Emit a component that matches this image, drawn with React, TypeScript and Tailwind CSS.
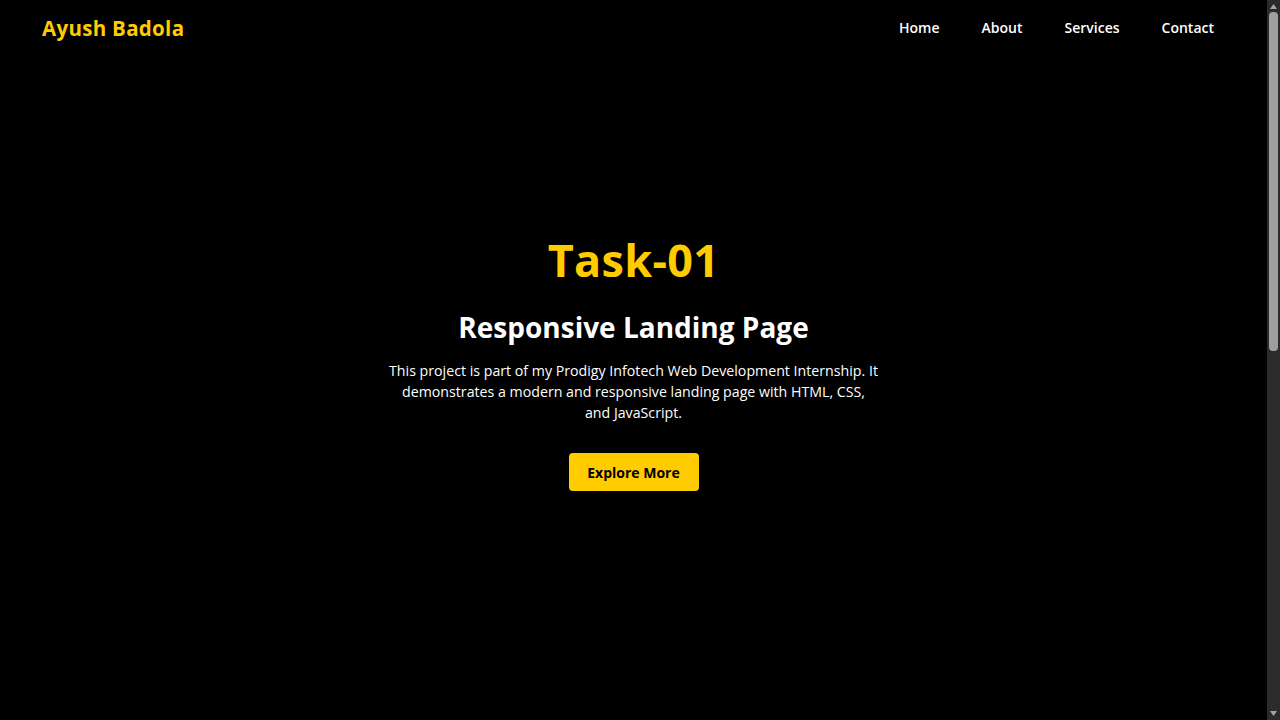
const links = ["Home", "About", "Services", "Contact"];

function FakeScrollbar() {
  return (
    <div className="w-[13px] shrink-0 h-screen bg-[#2b2b2b] flex flex-col items-center">
      <svg width="9" height="11" viewBox="0 0 9 11" className="shrink-0">
        <path d="M1 9 L4.5 4 L8 9 Z" fill="#a3a3a3" />
      </svg>
      <div className="mt-[1px] w-[9px] h-[339px] rounded-[4px] bg-[#9f9f9f]" />
      <div className="flex-1" />
      <svg width="9" height="11" viewBox="0 0 9 11" className="shrink-0 mb-[1px]">
        <path d="M1 3 L8 3 L4.5 8 Z" fill="#a3a3a3" />
      </svg>
    </div>
  );
}

export default function App() {
  return (
    <div className="h-screen flex bg-black text-white font-['Open_Sans',_'Liberation_Sans',_sans-serif] overflow-hidden">
      <div className="flex-1 flex flex-col min-w-0">
        <header className="flex items-center justify-between pl-[42px] pr-[53px] h-[57px] shrink-0">
          <a href="#" className="text-[20.5px] font-bold text-[#ffcc00] tracking-[0.3px]">
            Ayush Badola
          </a>
          <nav className="mb-[3px]">
            <ul className="flex gap-[42px]">
              {links.map((link) => (
                <li key={link}>
                  <a href="#" className="text-[14px] font-semibold text-white">
                    {link}
                  </a>
                </li>
              ))}
            </ul>
          </nav>
        </header>

        <section className="flex-1 flex flex-col items-center justify-center text-center px-5 pb-[51px]">
          <h1 className="text-[45px] leading-[1.1] font-bold text-[#ffcc00] tracking-[0.3px]">Task-01</h1>
          <h2 className="mt-[25px] text-[28px] leading-[1.3] font-bold">Responsive Landing Page</h2>
          <p className="mt-[15px] text-[14.2px] leading-[21px] font-medium">
            This project is part of my Prodigy Infotech Web Development Internship. It
            <br />
            demonstrates a modern and responsive landing page with HTML, CSS,
            <br />
            and JavaScript.
          </p>
          <button className="mt-[30px] w-[130px] h-[38px] rounded-[4px] bg-[#ffcc00] text-black text-[14px] font-bold">
            Explore More
          </button>
        </section>
      </div>
      <FakeScrollbar />
    </div>
  );
}
